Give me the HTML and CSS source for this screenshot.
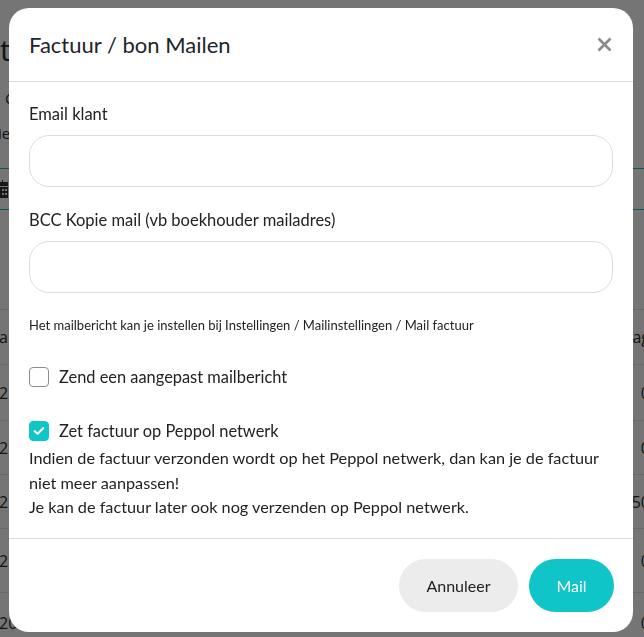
FILE: index.html
```html
<!DOCTYPE html>
<html lang="nl">
<head>
<meta charset="utf-8">
<title>Factuur / bon Mailen</title>
<link rel="stylesheet" href="styles.css">
</head>
<body>
<div class="page">
  <div class="page-title">t</div>
  <div class="page-sub1">C</div>
  <div class="page-sub2">ie</div>
  <div class="tabbar">
    <svg class="cal" width="8" height="18" viewBox="0 0 8 18"><rect x="0" y="2" width="8" height="16" fill="#333"/><rect x="0" y="6" width="8" height="1" fill="#fff"/><rect x="2" y="9" width="2" height="2" fill="#fff"/><rect x="5" y="9" width="2" height="2" fill="#fff"/><rect x="2" y="13" width="2" height="2" fill="#fff"/><rect x="5" y="13" width="2" height="2" fill="#fff"/><rect x="2" y="0" width="1" height="3" fill="#333"/></svg>
  </div>
  <div class="spacer"></div>
  <div class="trow thead"><span class="l">ak</span><span class="r">ag</span></div>
  <div class="trow r1"><span class="l">2</span><span class="r">0</span></div>
  <div class="trow r2"><span class="l">2</span><span class="r">0</span></div>
  <div class="trow r3"><span class="l">2</span><span class="r">50</span></div>
  <div class="trow r4"><span class="l">2</span><span class="r">0</span></div>
  <div class="trow r5"><span class="l">20</span><span class="r">0</span></div>
</div>

<div class="backdrop">
  <div class="modal">
    <div class="modal-header">
      <h5 class="modal-title">Factuur / bon Mailen</h5>
      <svg class="close" width="15" height="15" viewBox="0 0 15 15"><path d="M1.5 1.5 L13.5 13.5 M13.5 1.5 L1.5 13.5" stroke="#8a8a8a" stroke-width="2.6" stroke-linecap="butt"/></svg>
    </div>
    <div class="modal-body">
      <div class="form-group">
        <label class="label">Email klant</label>
        <div class="input"></div>
      </div>
      <div class="form-group last">
        <label class="label">BCC Kopie mail (vb boekhouder mailadres)</label>
        <div class="input"></div>
      </div>
      <p class="hint">Het mailbericht kan je instellen bij Instellingen / Mailinstellingen / Mail factuur</p>
      <div class="check-row first">
        <span class="box"></span>
        <span class="check-label">Zend een aangepast mailbericht</span>
      </div>
      <div class="check-row second">
        <span class="box checked"><svg width="12" height="10" viewBox="0 0 12 10"><path d="M1.8 5.2 L4.6 7.8 L10.2 2.2" fill="none" stroke="#fff" stroke-width="2.2" stroke-linecap="round" stroke-linejoin="round"/></svg></span>
        <span class="check-label">Zet factuur op Peppol netwerk</span>
      </div>
      <p class="info">Indien de factuur verzonden wordt op het Peppol netwerk, dan kan je de factuur niet meer aanpassen!<br>Je kan de factuur later ook nog verzenden op Peppol netwerk.</p>
    </div>
    <div class="modal-footer">
      <button class="btn btn-cancel">Annuleer</button>
      <button class="btn btn-mail">Mail</button>
    </div>
  </div>
</div>
</body>
</html>
```
FILE: styles.css
```css
* { box-sizing: border-box; }
html, body { margin: 0; padding: 0; }
body {
  width: 644px;
  height: 637px;
  overflow: hidden;
  background: #fff;
  font-family: "Lato", "Open Sans", sans-serif;
  color: #212529;
  position: relative;
}

/* underlying page */
.page { display: flex; flex-direction: column; font-family: "Open Sans", sans-serif; color: #2a2a2a; }
.page-title { font-size: 30px; line-height: 40px; margin-top: 30px; height: 40px; }
.page-sub1 { font-size: 15px; line-height: 20px; margin-top: 18px; padding-left: 5px; }
.page-sub2 { font-size: 15px; line-height: 20px; margin-top: 15px; margin-left: -2px; }
.tabbar { margin-top: 25px; height: 42px; border-top: 1px solid #0fc5c7; border-bottom: 1px solid #0fc5c7; display: flex; align-items: center; }
.cal { display: block; }
.spacer { height: 100px; border-bottom: 1px solid #e2e2e2; }
.trow { display: flex; justify-content: space-between; align-items: center; border-bottom: 1px solid #e2e2e2; font-size: 16px; }
.trow .l { margin-left: -1px; }
.trow .r { margin-right: -6px; }
.thead { height: 55px; font-weight: 400; }
.r1 { height: 56px; }
.r2 { height: 54px; }
.r3 { height: 54px; }
.r4 { height: 64px; }
.r5 { height: 60px; border-bottom: none; }

/* modal */
.backdrop {
  position: fixed;
  inset: 0;
  background: rgba(0, 0, 0, 0.54);
  padding: 8px 11px 0 9px;
  display: flex;
  align-items: flex-start;
}
.modal {
  flex: 1;
  background: #fff;
  border-radius: 20px;
  display: flex;
  flex-direction: column;
}
.modal-header {
  height: 74px;
  border-bottom: 1px solid #dcdcdc;
  display: flex;
  align-items: center;
  justify-content: space-between;
  padding: 0 21px 0 20px;
}
.modal-title {
  margin: 0;
  font-size: 22px;
  font-weight: 400;
  color: #212529;
}
.close { display: block; margin-top: -1px; }

.modal-body { padding: 20px 20px 18px 20px; }
.form-group { margin-bottom: 21px; }
.form-group.last { margin-bottom: 0; }
.label { display: block; font-size: 16.5px; line-height: 24px; margin-bottom: 9px; color: #222; }
.input {
  height: 52px;
  border: 1px solid #dcdcdc;
  border-radius: 20px;
}
.hint { margin: 23px 0 0; font-size: 13px; line-height: 19px; color: #222; }

.check-row { display: flex; align-items: center; gap: 10px; height: 24px; }
.check-row.first { margin-top: 30px; }
.check-row.second { margin-top: 30px; }
.box {
  width: 20px;
  height: 20px;
  border: 1.5px solid #8c8c8c;
  border-radius: 4px;
  display: flex;
  align-items: center;
  justify-content: center;
  flex: none;
}
.box.checked { background: #0fc5c7; border-color: #0fc5c7; }
.box svg { display: block; }
.check-label { font-size: 16.4px; line-height: 24px; color: #222; }

.info { margin: 3px 0 0; font-size: 16.25px; line-height: 24.5px; color: #222; }

.modal-footer {
  border-top: 1px solid #dcdcdc;
  padding: 20px 19px 20px 20px;
  display: flex;
  justify-content: flex-end;
  gap: 11px;
}
.btn {
  height: 53px;
  border: none;
  border-radius: 27px;
  font-family: inherit;
  font-size: 16px;
  padding: 0 26px;
  cursor: pointer;
}
.btn-cancel { background: #ececec; color: #222; width: 119px; }
.btn-mail { background: #0fc5c7; color: #fff; width: 85px; }
```
